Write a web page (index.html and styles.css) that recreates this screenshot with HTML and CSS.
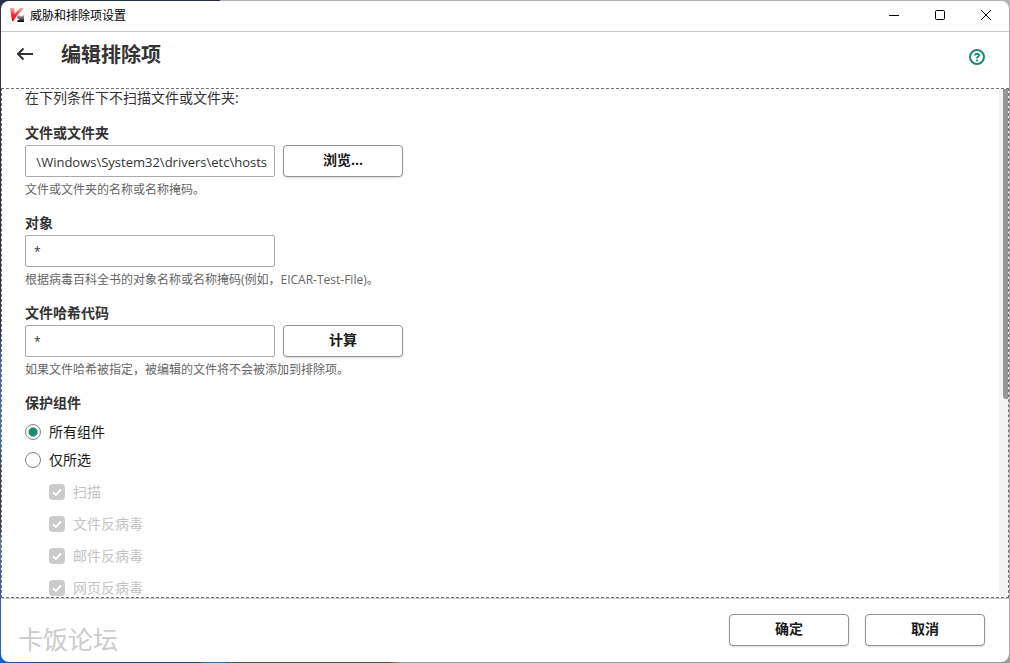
FILE: index.html
```html
<!DOCTYPE html>
<html lang="zh-CN">
<head>
<meta charset="utf-8">
<title>威胁和排除项设置</title>
<link rel="stylesheet" href="styles.css">
</head>
<body>
<div class="window">
  <div class="titlebar">
    <svg class="app-icon" width="16" height="16" viewBox="0 0 16 16" aria-hidden="true">
      <defs>
        <linearGradient id="red" x1="0" y1="0" x2="0" y2="1"><stop offset="0" stop-color="#f3b0b0"/><stop offset=".5" stop-color="#f43030"/><stop offset="1" stop-color="#ff0000"/></linearGradient>
        <linearGradient id="dark" x1="0" y1="0" x2="0" y2="1"><stop offset="0" stop-color="#b8b8b8"/><stop offset="1" stop-color="#000000"/></linearGradient>
      </defs>
      <path fill="url(#red)" d="M1 0h4.500v6L11 0h4L8 7.500 4 13.500 3 13z"/>
      <path fill="url(#dark)" d="M7.500 9L9.500 7l2.500 1.500L15 7v7H8.500v-2h2z"/>
    </svg>
    <span class="window-title">威胁和排除项设置</span>
    <button class="win-button" aria-label="最小化"><svg width="12" height="12" viewBox="0 0 12 12"><path d="M1 5.500h10"/></svg></button>
    <button class="win-button" aria-label="最大化"><svg width="12" height="12" viewBox="0 0 12 12"><rect x="1.500" y="0.500" width="9" height="9" rx="1"/></svg></button>
    <button class="win-button" aria-label="关闭"><svg width="12" height="12" viewBox="0 0 12 12"><path d="M1 0l10 10M11 0L1 10"/></svg></button>
  </div>
  <header class="header">
    <button class="icon-button" aria-label="返回"><svg width="16" height="14" viewBox="0 0 16 14"><path class="back-arrow" d="M6.500 .5L1 6l5.500 5.500M1.500 6H16"/></svg></button>
    <h1 class="heading">编辑排除项</h1>
    <button class="icon-button" aria-label="帮助"><svg width="16" height="16" viewBox="0 0 16 16"><circle class="help-line" cx="8" cy="8" r="7"/><path class="help-line" d="M6 6.600C6 4 10.200 4.200 10 6.500 9.900 7.800 8 7.700 8 9.400"/><circle class="help-dot" cx="8" cy="11.500" r="1.100"/></svg></button>
  </header>
  <main class="scroll-area">
    <form class="content">
      <p class="intro">在下列条件下不扫描文件或文件夹:</p>
      <div class="field">
        <label class="field-label" for="path">文件或文件夹</label>
        <div class="field-row">
          <input class="textbox textbox-end" id="path" type="text" value="\Windows\System32\drivers\etc\hosts">
          <button class="button" type="button">浏览...</button>
        </div>
        <p class="hint">文件或文件夹的名称或名称掩码。</p>
      </div>
      <div class="field">
        <label class="field-label" for="object">对象</label>
        <div class="field-row"><input class="textbox" id="object" type="text" value="*"></div>
        <p class="hint">根据病毒百科全书的对象名称或名称掩码(例如，EICAR-Test-File)。</p>
      </div>
      <div class="field">
        <label class="field-label" for="hash">文件哈希代码</label>
        <div class="field-row">
          <input class="textbox" id="hash" type="text" value="*">
          <button class="button" type="button">计算</button>
        </div>
        <p class="hint">如果文件哈希被指定，被编辑的文件将不会被添加到排除项。</p>
      </div>
      <fieldset class="components">
        <legend class="field-label">保护组件</legend>
        <label class="option"><input class="radio" type="radio" name="scope" checked>所有组件</label>
        <label class="option"><input class="radio" type="radio" name="scope">仅所选</label>
        <div class="suboptions">
          <label class="suboption"><input class="check" type="checkbox" checked disabled><svg class="tick" width="16" height="16" viewBox="0 0 16 16"><path d="M4 8.200l2.800 2.700L12 5.500"/></svg>扫描</label>
          <label class="suboption"><input class="check" type="checkbox" checked disabled><svg class="tick" width="16" height="16" viewBox="0 0 16 16"><path d="M4 8.200l2.800 2.700L12 5.500"/></svg>文件反病毒</label>
          <label class="suboption"><input class="check" type="checkbox" checked disabled><svg class="tick" width="16" height="16" viewBox="0 0 16 16"><path d="M4 8.200l2.800 2.700L12 5.500"/></svg>邮件反病毒</label>
          <label class="suboption"><input class="check" type="checkbox" checked disabled><svg class="tick" width="16" height="16" viewBox="0 0 16 16"><path d="M4 8.200l2.800 2.700L12 5.500"/></svg>网页反病毒</label>
        </div>
      </fieldset>
    </form>
    <div class="scroll-track"><div class="scroll-thumb"></div></div>
  </main>
  <footer class="footer">
    <span class="watermark">卡饭论坛</span>
    <button class="button">确定</button>
    <button class="button">取消</button>
  </footer>
</div>
</body>
</html>
```
FILE: styles.css
```css
* {
  box-sizing: border-box;
}

body {
  display: flex;
  height: 100vh;
  margin: 0;
  padding: 1px;
  overflow: hidden;
  background:
    linear-gradient(90deg, #263149 220px, #b4b4b4 220px) top / 100% 8px no-repeat,
    linear-gradient(90deg, #1b5fc4 0, #353a73 60px, #353a73 200px, #2472b0 204px, #2472b0 226px, #5b5148 228px, #5b5148 390px, #9a9a9a 400px) bottom / 100% 8px no-repeat,
    linear-gradient(180deg, #2b344b 330px, #4166b8 360px, #3d7bb0 440px, #343f54 470px, #343f54 530px, #5b83a8 540px, #3b5eb6 580px, #1b5fc4) left / 8px 100% no-repeat,
    #a8a8a8;
  color: #262626;
  font: 14px/20px "Open Sans", "Noto Sans CJK SC", sans-serif;
}

button,
input {
  font: inherit;
  color: inherit;
}

p,
h1,
fieldset {
  margin: 0;
}

.window {
  display: flex;
  flex: 1;
  flex-direction: column;
  min-width: 0;
  overflow: hidden;
  border-radius: 8px;
  background: #ffffff;
}

.titlebar {
  display: flex;
  flex: none;
  align-items: center;
  height: 31px;
  padding-left: 8px;
  border-bottom: 1px solid #c8c8c8;
}

.window-title {
  flex: 1;
  padding-left: 5px;
  color: #000000;
  font-size: 12px;
}

.win-button {
  display: flex;
  align-items: center;
  justify-content: center;
  width: 46px;
  height: 30px;
  padding: 0;
  border: 0;
  background: none;
}

.win-button svg {
  fill: none;
  stroke: #000000;
}

.header {
  display: flex;
  flex: none;
  align-items: center;
  height: 56px;
  padding: 0 24px 10px 16px;
}

.icon-button {
  display: flex;
  padding: 0;
  border: 0;
  background: none;
}

.header .icon-button:last-child {
  margin-top: 4px;
}

.back-arrow {
  fill: none;
  stroke: #333333;
  stroke-width: 2;
}

.help-line {
  fill: none;
  stroke: #1d8a70;
  stroke-width: 2;
}

.help-dot {
  fill: #1d8a70;
}

.heading {
  flex: 1;
  padding-left: 28px;
  color: #333333;
  font-size: 20px;
  line-height: 28px;
}

.scroll-area {
  display: flex;
  flex: 1;
  min-height: 0;
  overflow: hidden;
  border: 1px dashed #707070;
}

.content {
  flex: 1;
  padding-left: 23px;
  color: #333333;
}

.intro {
  margin-bottom: 16px;
  line-height: 18px;
}

.field {
  margin-bottom: 13px;
}

.field-label {
  display: block;
  padding: 0;
  font-weight: 700;
}

.field-row {
  display: flex;
  gap: 8px;
  margin: 2px 0 3px;
}

.textbox {
  width: 250px;
  height: 32px;
  padding: 0 8px;
  border: 1px solid #ababab;
  border-radius: 2px;
  background: #ffffff;
  font-size: 12px;
  line-height: 30px;
}

.textbox-end {
  padding: 2px 7px 0 6px;
  font-size: 13px;
  text-align: right;
}

.button {
  width: 120px;
  height: 32px;
  padding: 0 0 2px;
  border: 1px solid #949494;
  border-radius: 4px;
  background: #ffffff;
  box-shadow: 0 1px 2px rgba(0, 0, 0, 0.15);
  color: #1a1a1a;
  font-weight: 700;
}

.hint {
  color: #666666;
  font-size: 12px;
}

.components {
  min-width: 0;
  padding: 0;
  border: 0;
}

.option,
.suboption {
  display: flex;
  align-items: center;
  gap: 8px;
  height: 28px;
  color: #1a1a1a;
}

.components .field-label {
  margin-bottom: 5px;
}

.radio,
.check {
  flex: none;
  width: 16px;
  height: 16px;
  margin: 0;
  appearance: none;
}

.radio {
  border: 1px solid #808080;
  border-radius: 50%;
}

.radio:checked {
  background: radial-gradient(circle, #1d8a70 0, #1d8a70 4px, #ffffff 5px);
}

.suboptions {
  padding: 2px 0 0 24px;
}

.suboption {
  height: 32px;
  color: #c4c4c4;
}

.check {
  border-radius: 4px;
  background: #cccccc;
}

.tick {
  flex: none;
  margin-left: -24px;
  fill: none;
  stroke: #ffffff;
  stroke-width: 2;
}

.scroll-track {
  flex: none;
  width: 9px;
  padding-left: 4px;
  background: #f4f4f4;
}

.scroll-thumb {
  height: 61%;
  border-radius: 0 0 0 3px;
  background: #969696;
}

.footer {
  display: flex;
  flex: none;
  align-items: center;
  gap: 16px;
  height: 64px;
  padding: 0 24px 2px 17px;
  border-top: 1px solid #c8c8c8;
}

.watermark {
  flex: 1;
  padding-top: 18px;
  color: #cccccc;
  font-size: 25px;
  font-weight: 400;
  line-height: 28px;
}
```
